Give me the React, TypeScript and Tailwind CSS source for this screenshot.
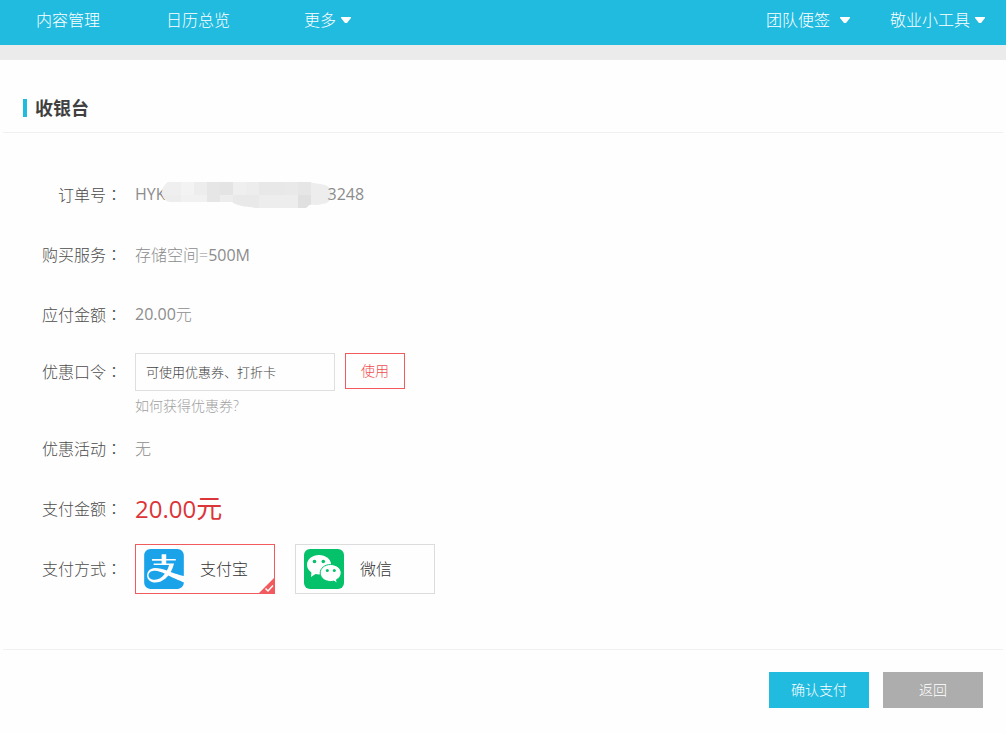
import { useState } from "react";
import type { ReactNode } from "react";
import { SiAlipay } from "react-icons/si";

function Caret() {
  return (
    <svg viewBox="0 0 10 6" className="h-1.5 w-2.5" aria-hidden="true">
      <path d="M0 0h10v1L6 6H4L0 1z" fill="currentColor" />
    </svg>
  );
}

function WechatIcon() {
  return (
    <svg viewBox="0 0 40 40" className="size-10 shrink-0" aria-hidden="true">
      <rect width="40" height="40" rx="6" fill="#04c16a" />
      <path
        d="M15 6C8.300 6 3 10.300 3 15.800c0 3.100 1.600 5.800 4.400 7.600L7 28l4.500-2.900c1.100.3 2.300.4 3.500.4 6.700 0 12.200-4.200 12.200-9.700S21.700 6 15 6z"
        fill="#fff"
      />
      <path
        d="M26.600 15.500c-5.900 0-10.400 3.800-10.400 8.500s4.500 8.500 10.400 8.500c1.100 0 2.200-.1 3.200-.4l3.500 2.100-.8-3.500c2.800-1.500 4.700-3.900 4.700-6.700 0-4.700-4.700-8.500-10.600-8.500z"
        fill="#fff"
        stroke="#04c16a"
        strokeWidth="1"
      />
      <g fill="#04c16a">
        <circle cx="10.500" cy="12.500" r="1.800" />
        <circle cx="19.300" cy="12.500" r="1.800" />
        <circle cx="23.300" cy="21.400" r="1.500" />
        <circle cx="30.300" cy="21.400" r="1.500" />
      </g>
    </svg>
  );
}

function CheckedCorner() {
  return (
    <svg viewBox="0 0 17 17" className="absolute -right-px -bottom-px size-[17px]" aria-hidden="true">
      <path d="M17 0v17H0z" fill="#f15b5e" />
      <path d="M7.500 11.500l2.500 2.500 5-5.500" fill="none" stroke="#fff" strokeWidth="1.500" />
    </svg>
  );
}

function OrderMask() {
  return (
    <svg viewBox="0 0 170 26" className="-mx-1 h-[26px] w-[170px]" aria-hidden="true">
      <clipPath id="mask-shape">
        <path d="M6 0H148c4 2 9 1 15 3 5 2 7 6 7 10s-4 9-10 9c-5 2-10 0-13 1l-3 3H94c-8-2-17-1-24-6H9C3 20 0 15 0 11S2 3 6 0z" />
      </clipPath>
      <g clipPath="url(#mask-shape)">
        <rect width="170" height="26" fill="#ededed" />
        <rect width="19" height="13" fill="#efefef" />
        <rect x="19" width="13" height="13" fill="#f3f3f3" />
        <rect x="19" y="13" width="26" height="13" fill="#f1f1f1" />
        <rect x="45" width="13" height="26" fill="#e6e6e6" />
        <rect x="58" width="13" height="13" fill="#e4e4e4" />
        <rect x="71" width="13" height="13" fill="#efefef" />
        <rect x="71" y="13" width="26" height="13" fill="#e9e9e9" />
        <rect x="97" width="26" height="13" fill="#e8e8e8" />
        <rect x="123" width="13" height="13" fill="#e9e9e9" />
        <rect x="136" width="13" height="13" fill="#e6e6e6" />
        <rect x="136" y="13" width="13" height="13" fill="#e0e0e0" />
      </g>
    </svg>
  );
}

function LabelText({ text }: { text: string }) {
  return (
    <span className="block w-[119px] shrink-0 pb-0.5 text-right text-[#4c4c4c]">
      {text}
      <span className="font-['Noto_Sans_CJK_TC',sans-serif]">：</span>
    </span>
  );
}

function Row({ label, children }: { label: string; children: ReactNode }) {
  return (
    <div className="flex h-[60px] items-center gap-[13px]">
      <LabelText text={label} />
      {children}
    </div>
  );
}

const payCard =
  "relative flex h-[50px] w-[140px] cursor-pointer items-center gap-4 border border-[#dcdcdc] pl-2 text-[#333] has-[:checked]:border-[#f15b5e]";

export default function App() {
  const [method, setMethod] = useState("alipay");

  return (
    <div className="min-h-screen bg-[#fefefe] font-['Open_Sans','Noto_Sans_CJK_SC',sans-serif] text-base leading-6 font-light text-[#8c8c8c]">
      <header className="flex h-[45px] items-center justify-between bg-[#21bbdf] pr-[21px] pb-1.5 pl-9 text-white">
        <nav className="flex items-center">
          <a href="#content" className="mr-[66px]">内容管理</a>
          <a href="#calendar" className="mr-[74px]">日历总览</a>
          <button type="button" className="flex items-center gap-[5px]">更多<Caret /></button>
        </nav>
        <div className="flex items-center gap-10">
          <button type="button" className="flex items-center gap-2.5">团队便签<Caret /></button>
          <button type="button" className="flex items-center gap-[5px]">敬业小工具<Caret /></button>
        </div>
      </header>
      <div className="h-[15px] bg-[#ebebeb]" />

      <main className="px-[3px]">
        <div className="flex h-[73px] items-center gap-2 border-b border-[#f0f0f0] pt-6 pl-5">
          <span className="h-[18px] w-1 bg-[#21bbdf]" />
          <h1 className="text-lg font-bold text-[#404040]">收银台</h1>
        </div>

        <form onSubmit={(e) => e.preventDefault()}>
          <div className="border-b border-[#f0f0f0] pt-8 pb-[50px]">
            <Row label="订单号">
              <span className="flex items-center">
                <span className="pb-0.5 font-normal">HYK</span>
                <OrderMask />
                <span className="pb-0.5 font-normal">3248</span>
              </span>
            </Row>
            <Row label="购买服务">
              <span>存储空间=<span className="font-normal">500M</span></span>
            </Row>
            <Row label="应付金额">
              <span className="pb-0.5"><span className="font-normal">20.00</span>元</span>
            </Row>
            <div className="flex h-[74px] items-start gap-[13px] pt-2">
              <label htmlFor="coupon" className="pt-1.5">
                <LabelText text="优惠口令" />
              </label>
              <div>
                <div className="flex items-start gap-2.5">
                  <input
                    id="coupon"
                    type="text"
                    placeholder="可使用优惠券、打折卡"
                    className="h-[38px] w-[200px] border border-[#dfdfdf] px-2.5 text-[13px] text-[#444] outline-none placeholder:text-[#444]"
                  />
                  <button type="button" className="h-9 w-[60px] border border-[#f15b5e] text-sm text-[#ee4d50]">使用</button>
                </div>
                <a href="#coupon-help" className="mt-[5px] block text-sm text-[#a0a0a0]">如何获得优惠券?</a>
              </div>
            </div>
            <Row label="优惠活动">无</Row>
            <Row label="支付金额">
              <span className="pb-0.5 text-[26px] leading-8 font-normal text-[#dc3539]">
                <span className="text-2xl">20.00</span>元
              </span>
            </Row>
            <Row label="支付方式">
              <div className="flex gap-5">
                <label className={payCard}>
                  <input type="radio" name="method" className="sr-only" checked={method === "alipay"} onChange={() => setMethod("alipay")} />
                  <SiAlipay className="size-10 shrink-0 text-[#1ba3ea]" aria-hidden="true" />
                  支付宝
                  {method === "alipay" && <CheckedCorner />}
                </label>
                <label className={payCard}>
                  <input type="radio" name="method" className="sr-only" checked={method === "wechat"} onChange={() => setMethod("wechat")} />
                  <WechatIcon />
                  微信
                  {method === "wechat" && <CheckedCorner />}
                </label>
              </div>
            </Row>
          </div>

          <div className="flex items-center justify-end gap-3.5 pt-[22px] pr-5 pb-6 text-sm text-white">
            <button type="submit" className="h-9 w-[100px] bg-[#21bbdf]">确认支付</button>
            <button type="button" className="h-9 w-[100px] bg-[#adadad]">返回</button>
          </div>
        </form>
      </main>
    </div>
  );
}
